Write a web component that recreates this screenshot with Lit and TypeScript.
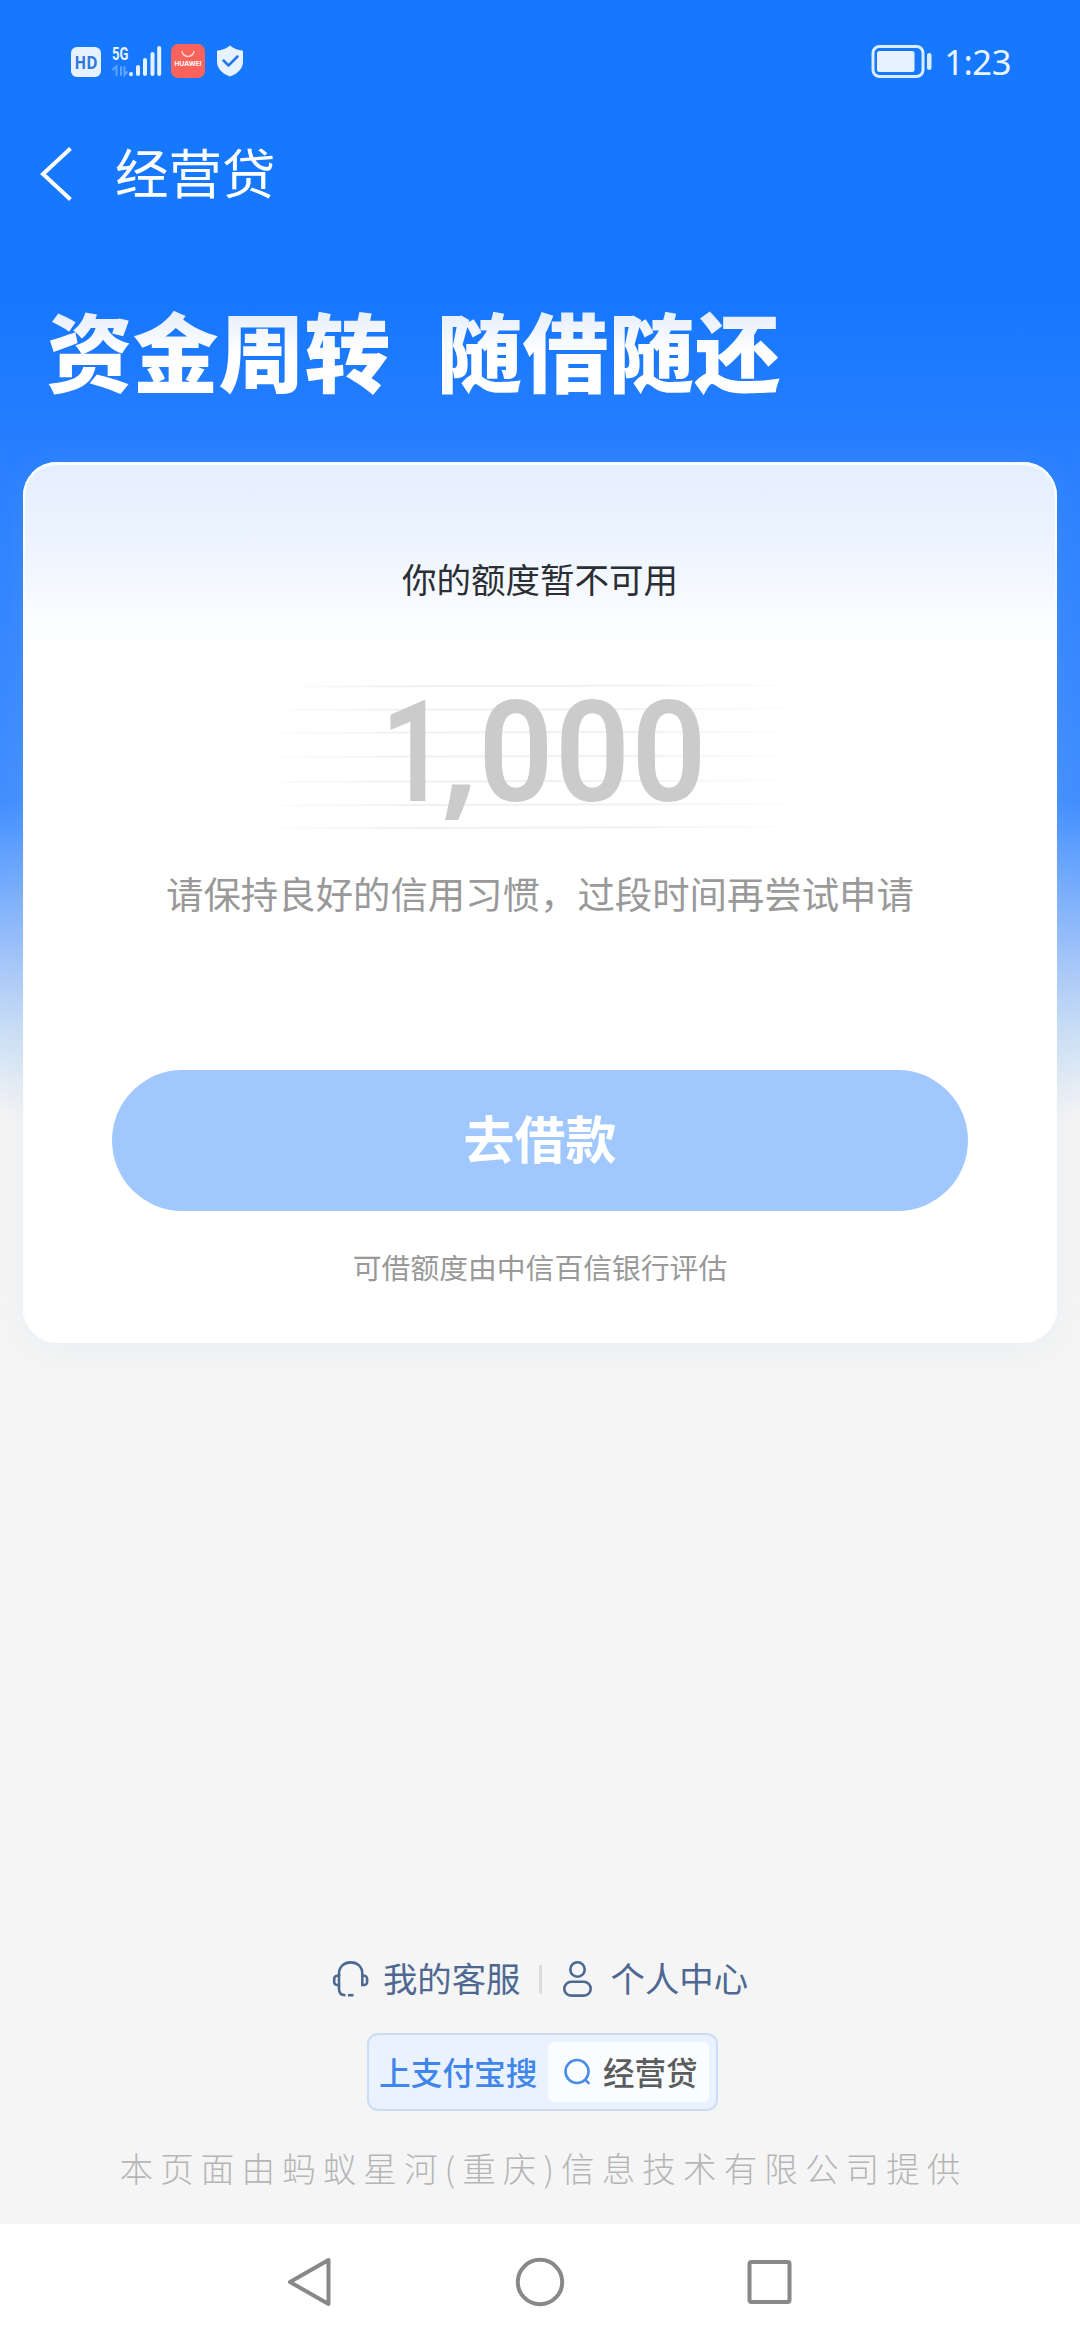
import { LitElement, html, svg, css } from "lit";
import { customElement, property } from "lit/decorators.js";

const CJK = css`"Noto Sans CJK SC", "Noto Sans", sans-serif`;

@customElement("status-bar")
class StatusBar extends LitElement {
  static styles = css`
    :host { display: flex; height: 88px; padding: 0 69px 0 71px; justify-content: space-between; align-items: flex-start; box-sizing: border-box; }
    .left { display: block; margin-top: 40px; }
    .right { display: flex; align-items: flex-start; }
    .battery { display: block; margin-top: 40px; }
    .time { font: 400 34.5px/40px "Noto Sans", sans-serif; color: #eaf5ff; margin: 42px 0 0 11px; letter-spacing: -0.4px; }
    .hd { font: 700 18px "Open Sans", "Noto Sans", sans-serif; }
    .net { font: 700 18px "Roboto", sans-serif; }
    .brand { font: 700 6.6px "Inter", sans-serif; }
  `;
  render() {
    return html`
      <svg class="left" width="180" height="44" viewBox="71 40 180 44">
        <rect x="71" y="47" width="30" height="30" rx="6" fill="#e6f3ff" />
        <text class="hd" x="74.5" y="69" textLength="23" lengthAdjust="spacingAndGlyphs" fill="#2f78dd">HD</text>
        <text class="net" x="112" y="59.5" textLength="16.5" lengthAdjust="spacingAndGlyphs" fill="#e6f3ff">5G</text>
        <g stroke="#62a5ff" stroke-width="2" fill="none" stroke-linecap="round">
          <path d="M113 69.500l3.500-3V75M121 67v8M124.500 67v8l2.500-3" />
        </g>
        <path d="M131 74v.2M138 67v7M145 60v14M152.500 54v20M159.200 48v26" stroke="#e6f3ff" stroke-width="4" stroke-linecap="round" />
        <rect x="171" y="44" width="34" height="34" rx="7" fill="#fa625c" />
        <path d="M182 51a6 5.500 0 0 0 12 0" fill="none" stroke="#ffd8d2" stroke-width="1.500" />
        <text class="brand" x="174.500" y="66" textLength="27" lengthAdjust="spacingAndGlyphs" fill="#fff">HUAWEI</text>
        <path d="M230 45.500c3.500 3 7.500 4.500 13 5.200v10.500c0 7.500-5 12.300-13 15.300c-8-3-13-7.800-13-15.300V50.700c5.500-.7 9.500-2.200 13-5.200z" fill="#e6f3ff" />
        <path d="M223.500 60.500l5 5l9-9" fill="none" stroke="#2577e6" stroke-width="2.500" stroke-linecap="round" stroke-linejoin="round" />
      </svg>
      <div class="right">
        <svg class="battery" width="62" height="44" viewBox="871 40 62 44">
          <rect x="873" y="46.500" width="50" height="30" rx="6.500" fill="none" stroke="#d8edff" stroke-width="3" />
          <rect x="877" y="51" width="37.500" height="21" rx="2.500" fill="#e6f3ff" />
          <rect x="927" y="53" width="4.500" height="17" rx="2.200" fill="#d8edff" />
        </svg>
        <div class="time">1:23</div>
      </div>
    `;
  }
}

@customElement("quota-amount")
class QuotaAmount extends LitElement {
  @property() value = "";
  static styles = css`
    :host { display: block; }
    svg { display: block; }
    .num { font: 600 141px "Roboto", sans-serif; fill: #cbcbcb; }
    .comma { font: 600 144px "Noto Sans", "Open Sans", sans-serif; fill: #cbcbcb; }
  `;
  render() {
    const xs = [381, 440, 478.5, 555, 631.5];
    const lines = [[300, 686], [290, 709.5], [276, 732.5], [272, 756.5], [258, 781.5], [246, 805], [252, 828]];
    return html`
      <svg width="600" height="240" viewBox="240 636 600 240">
        <defs>
          <linearGradient id="fade" gradientUnits="userSpaceOnUse" x1="250" y1="0" x2="815" y2="0">
            <stop offset="0" stop-color="#f0f0f0" stop-opacity="0" />
            <stop offset=".3" stop-color="#f0f0f0" />
            <stop offset=".65" stop-color="#f1f1f1" />
            <stop offset="1" stop-color="#f2f2f2" stop-opacity="0" />
          </linearGradient>
        </defs>
        ${lines.map(([x, y]) => svg`<path d="M${x} ${y + 0.5}L${x + 540} ${y - 1}" stroke="url(#fade)" stroke-width="2" />`)}
        ${[...this.value].map((c, i) =>
          c === ","
            ? svg`<text class="comma" x=${xs[i]} y="801">${c}</text>`
            : svg`<text class="num" transform="translate(${xs[i]} 801) scale(${c === "1" ? 0.82 : 0.93} 1)">${c}</text>`
        )}
      </svg>
    `;
  }
}

@customElement("quota-card")
class QuotaCard extends LitElement {
  static styles = css`
    :host {
      display: flex; flex-direction: column; align-items: center; box-sizing: border-box;
      margin: 0 23px; height: 881px; border-radius: 34px; padding-top: 96px;
      background: linear-gradient(180deg, #e4eefd 0, #eef5ff 90px, #fbfdff 160px, #fff 190px);
      box-shadow: inset 0 3px 0 #fbfeff, inset 2px 0 0 #fbfeff, inset -2px 0 0 #fbfeff, 0 6px 34px rgba(170, 195, 220, .13);
      font-family: ${CJK};
    }
    .state { font-size: 34.5px; line-height: 40px; color: #2b2e33; }
    .amount { margin-top: 38px; }
    .tip { font-size: 37.4px; line-height: 44px; color: #999; margin-top: -5px; white-space: nowrap; }
    .go { width: 856px; height: 141px; border: 0; padding: 0 0 7px; border-radius: 71px; background: #a1c7ff; color: #fff; font: 700 51px/60px ${CJK}; margin-top: 155px; }
    .by { font-size: 28.800px; line-height: 36px; color: #999; margin-top: 38px; }
  `;
  render() {
    return html`
      <div class="state">你的额度暂不可用</div>
      <quota-amount class="amount" value="1,000"></quota-amount>
      <div class="tip">请保持良好的信用习惯，过段时间再尝试申请</div>
      <button class="go">去借款</button>
      <div class="by">可借额度由中信百信银行评估</div>
    `;
  }
}

@customElement("page-footer")
class PageFooter extends LitElement {
  static styles = css`
    :host { display: flex; flex-direction: column; align-items: center; font-family: ${CJK}; }
    svg { display: block; }
    .links { display: flex; align-items: center; height: 40px; color: #4d6992; font-size: 34.4px; line-height: 40px; }
    .label { margin-top: -4px; }
    .headset { margin-right: 13px; }
    .bar { width: 3px; height: 29px; background: #dcdcdc; margin: 0 20px 0 18px; }
    .person { margin-right: 18px; }
    .search { box-sizing: border-box; display: flex; align-items: center; width: 351px; height: 78px; margin: 34px 0 0 5px; border: 2px solid #cbdcf6; border-radius: 11px; background: #eaf2ff; padding: 0 7px 0 10px; justify-content: space-between; }
    .lead { font-size: 31.7px; line-height: 40px; color: #3f86ea; margin-top: -3px; font-weight: 500; }
    .box { display: flex; align-items: center; width: 161px; height: 60px; box-sizing: border-box; padding-left: 15px; gap: 12px; background: #fafdff; border-radius: 6px; }
    .word { font-size: 31.5px; line-height: 40px; color: #5c5c5c; margin-top: -3px; font-weight: 500; }
    .legal { font-size: 33.6px; line-height: 40px; letter-spacing: 7.05px; font-weight: 300; color: #b5b5b5; margin: 37px 0 0 7px; white-space: nowrap; }
  `;
  render() {
    return html`
      <div class="links">
        <svg class="headset" width="38" height="38" viewBox="0 0 38 38" fill="none" stroke="#4d6992" stroke-width="2.600">
          <path d="M7 16V14C7 6.500 12 2.400 18.700 2.400S30.300 6.500 30.300 14V16M7 25v4c0 4.500 2 6.200 6.500 6.200" />
          <path d="M7 15.800H5.200a3 3 0 0 0-3 3v3.200a3 3 0 0 0 3 3H7zM30.300 15.800h1.800a3 3 0 0 1 3 3v3.200a3 3 0 0 1-3 3h-1.800z" />
          <path d="M16 35.200h5.500" />
        </svg>
        <span class="label">我的客服</span>
        <span class="bar"></span>
        <svg class="person" width="31" height="38" viewBox="0 0 31 38" fill="none" stroke="#4d6992" stroke-width="2.600">
          <circle cx="15.500" cy="9.500" r="7.200" />
          <rect x="2.300" y="21.800" width="26.400" height="13.800" rx="6.900" />
        </svg>
        <span class="label">个人中心</span>
      </div>
      <div class="search">
        <span class="lead">上支付宝搜</span>
        <span class="box">
          <svg width="28" height="28" viewBox="0 0 28 28" fill="none" stroke="#4a8de8" stroke-width="2.600" stroke-linecap="round">
            <circle cx="14" cy="13.500" r="11.500" /><path d="M22.500 22l3.200 3.200" />
          </svg>
          <span class="word">经营贷</span>
        </span>
      </div>
      <div class="legal">本页面由蚂蚁星河(重庆)信息技术有限公司提供</div>
    `;
  }
}

@customElement("system-nav")
class SystemNav extends LitElement {
  static styles = css`
    :host { display: flex; justify-content: center; gap: 180px; height: 116px; background: #fff; }
    svg { display: block; margin-top: 33px; }
  `;
  render() {
    return html`
      <svg width="50" height="50" viewBox="0 0 50 50" fill="none" stroke="#888" stroke-width="4" stroke-linejoin="round"><path d="M43.500 3v44L5 25z" /></svg>
      <svg width="50" height="50" viewBox="0 0 50 50" fill="none" stroke="#888" stroke-width="4"><circle cx="25" cy="25" r="22.200" /></svg>
      <svg width="50" height="50" viewBox="0 0 50 50" fill="none" stroke="#888" stroke-width="4"><rect x="4.500" y="5" width="40" height="40" rx="2" /></svg>
    `;
  }
}

@customElement("app-root")
class AppRoot extends LitElement {
  static styles = css`
    :host { display: block; }
    .page {
      display: flex; flex-direction: column; width: 1080px; height: 2340px; overflow: hidden; font-family: ${CJK};
      background: linear-gradient(180deg, #1677ff 0, #1677ff 300px, #2a80ff 470px, #3a89ff 700px, #418fff 803px, #6aa6fe 868px, #a7c7f9 965px, #cde0f6 1035px, #e6edf5 1085px, #f5f5f5 1118px);
    }
    .top { display: flex; align-items: center; height: 172px; box-sizing: border-box; padding: 0 0 0 38px; color: #fff; }
    .back { display: block; margin-right: 39px; }
    .title { font-size: 53.5px; line-height: 60px; margin-top: -7px; }
    .slogan {
      display: flex; gap: 46px; height: 202px; box-sizing: border-box; padding: 39px 0 0 46.5px; margin: 0;
      font-weight: 900; font-size: 86px; line-height: 100px; color: #fff;
    }
    .slogan span { height: 100px; background: linear-gradient(180deg, #e6effc 14px, #fff 54px); background-clip: text; -webkit-background-clip: text; color: transparent; }
    .fill { flex: 1; }
    .foot { margin-bottom: 36px; }
  `;
  render() {
    return html`
      <div class="page">
        <status-bar></status-bar>
        <div class="top">
          <svg class="back" width="38" height="60" viewBox="38 144 38 60" fill="none" stroke="#fff" stroke-width="4"><path d="M70.500 148.500L43 174l27.500 25.500" /></svg>
          <span class="title">经营贷</span>
        </div>
        <h1 class="slogan"><span>资金周转</span><span>随借随还</span></h1>
        <quota-card></quota-card>
        <div class="fill"></div>
        <page-footer class="foot"></page-footer>
        <system-nav></system-nav>
      </div>
    `;
  }
}
